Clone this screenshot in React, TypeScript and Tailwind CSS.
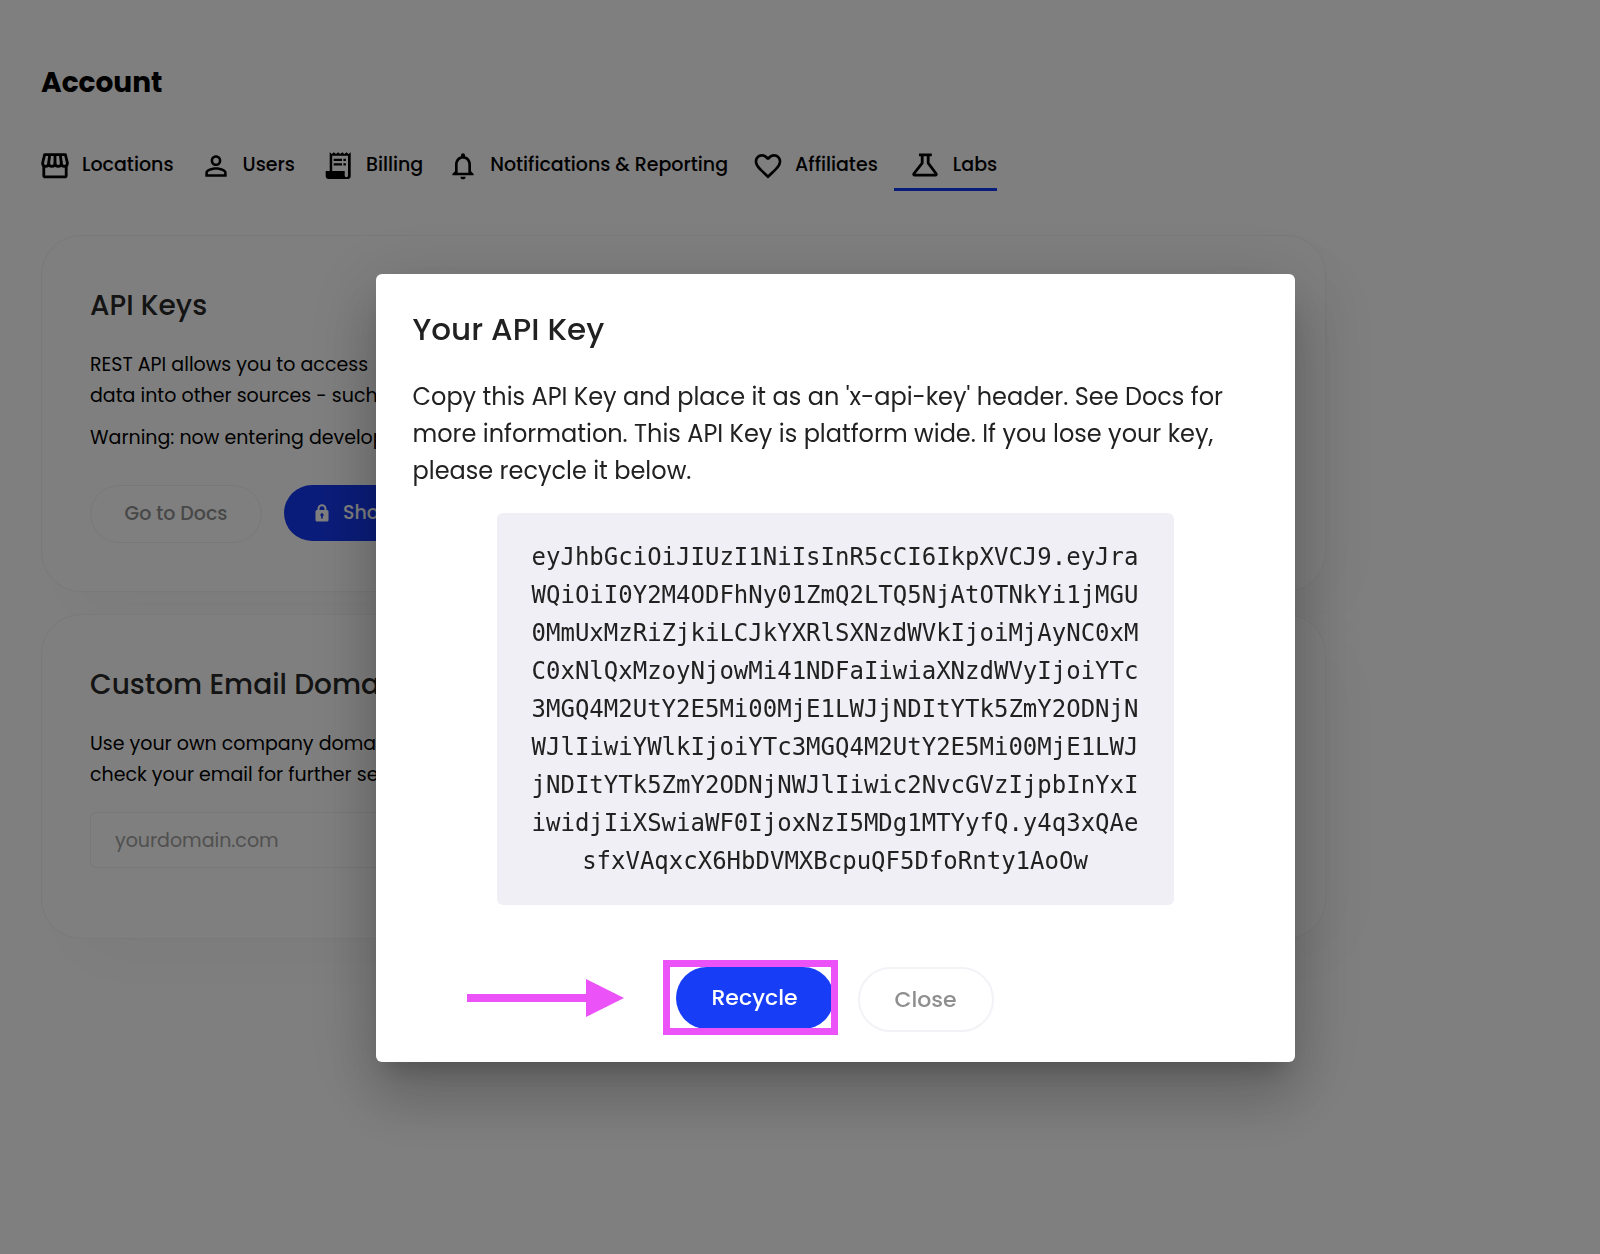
import type { ReactNode } from "react";
import { MdFavoriteBorder, MdNotificationsNone, MdPersonOutline } from "react-icons/md";

const API_KEY =
  "eyJhbGciOiJIUzI1NiIsInR5cCI6IkpXVCJ9.eyJra" +
  "WQiOiI0Y2M4ODFhNy01ZmQ2LTQ5NjAtOTNkYi1jMGU" +
  "0MmUxMzRiZjkiLCJkYXRlSXNzdWVkIjoiMjAyNC0xM" +
  "C0xNlQxMzoyNjowMi41NDFaIiwiaXNzdWVyIjoiYTc" +
  "3MGQ4M2UtY2E5Mi00MjE1LWJjNDItYTk5ZmY2ODNjN" +
  "WJlIiwiYWlkIjoiYTc3MGQ4M2UtY2E5Mi00MjE1LWJ" +
  "jNDItYTk5ZmY2ODNjNWJlIiwic2NvcGVzIjpbInYxI" +
  "iwidjIiXSwiaWF0IjoxNzI5MDg1MTYyfQ.y4q3xQAe" +
  "sfxVAqxcX6HbDVMXBcpuQF5DfoRnty1AoOw";

function StoreIcon() {
  return (
    <svg viewBox="0 0 32 32" className="size-8 shrink-0" fill="none" stroke="currentColor" strokeWidth="2.8" strokeLinejoin="round">
      <path d="M5.600 4.600h20.800l2 8.400c0 2-1.200 3.400-3 3.400s-3.100-1.400-3.100-3.400c0 2-1.300 3.400-3.100 3.400S16 15 16 13c0 2-1.400 3.400-3.200 3.400S9.700 15 9.700 13c0 2-1.300 3.400-3.100 3.400s-3-1.400-3-3.400z" />
      <path d="M10.700 4.600l-1 8.400M16 4.600V13M21.300 4.600l1 8.400" />
      <path d="M4.800 16v9.400c0 .8.500 1.400 1.400 1.400h19.600c.9 0 1.400-.6 1.400-1.400V16" />
    </svg>
  );
}

function ReceiptIcon() {
  return (
    <svg viewBox="0 0 32 32" className="size-8 shrink-0" fill="currentColor">
      <path
        fillRule="evenodd"
        d="M6.700 2.200l2.100 1.800 2.100-1.800L13 4l2.100-1.800L17.200 4l2.100-1.800L21.400 4l2.100-1.800L25.600 4l2.100-1.800V26a3 3 0 0 1-3 3h-19a3 3 0 0 1-3-3v-5h4zM9.200 5.800V21h12.500v4.500a1.600 1.600 0 0 0 3.300 0V5.800z"
      />
      <path d="M10.700 8.800h8.300v2.300h-8.300zM20.400 8.800h2.500v2.300h-2.500zM10.700 13.300h8.300v2.300h-8.300zM20.400 13.300h2.500v2.300h-2.500z" />
    </svg>
  );
}

function FlaskIcon() {
  return (
    <svg viewBox="0 0 32 32" className="size-8 shrink-0" fill="none" stroke="currentColor" strokeWidth="2.8" strokeLinejoin="round">
      <path d="M9 4.800h12.800M12.200 4.800v8.300L4 23.500c-.7.900-.3 1.700.8 1.700h20.400c1.100 0 1.500-.8.800-1.700L18.200 13.100V4.800" />
    </svg>
  );
}

function LockIcon() {
  return (
    <svg viewBox="0 0 14 18" className="h-[18px] w-[14px] shrink-0" fill="currentColor">
      <path
        fillRule="evenodd"
        d="M2.500 6V4.800a4.500 4.500 0 0 1 9 0V6h.5a1.500 1.500 0 0 1 1.500 1.500v8.500a1.500 1.500 0 0 1-1.500 1.500H2A1.500 1.500 0 0 1 .5 16V7.500A1.500 1.500 0 0 1 2 6zM4.500 6h5V4.800a2.500 2.500 0 0 0-5 0zM7 9.200a1.600 1.600 0 0 0-.8 3v2.300h1.600v-2.300a1.600 1.600 0 0 0-.8-3z"
      />
    </svg>
  );
}

function Tab({ icon, label, className }: { icon: ReactNode; label: string; className: string }) {
  return (
    <a href="#" className={`flex h-[50px] items-center gap-[11px] border-b-[3px] pt-0.5 ${className}`}>
      {icon}
      <span>{label}</span>
    </a>
  );
}

function Card({ title, children }: { title: string; children: ReactNode }) {
  return (
    <section className="rounded-[40px] border border-[#f2f2f6] bg-white px-12 pt-[49px] shadow-[24px_24px_64px_rgba(0,0,0,0.03)]">
      <h2 className="text-[28px] leading-[42px] font-medium text-[#282828]">{title}</h2>
      {children}
    </section>
  );
}

export default function App() {
  return (
    <div className="min-h-screen bg-white font-['Poppins','Inter',sans-serif] text-black">
      <main className="px-[41px] pt-[63px]">
        <h1 className="text-[28px] leading-10 font-bold">Account</h1>
        <nav className="mt-[38px] -ml-0.5 flex text-[19px] font-medium whitespace-nowrap">
          <Tab className="border-transparent" icon={<StoreIcon />} label="Locations" />
          <Tab className="ml-[26px] border-transparent" icon={<MdPersonOutline className="size-8" />} label="Users" />
          <Tab className="ml-7 border-transparent" icon={<ReceiptIcon />} label="Billing" />
          <Tab className="ml-6 border-transparent" icon={<MdNotificationsNone className="size-8" />} label="Notifications & Reporting" />
          <Tab className="ml-6 border-transparent" icon={<MdFavoriteBorder className="size-8" />} label="Affiliates" />
          <Tab className="ml-4 border-[#1539f4] pl-4" icon={<FlaskIcon />} label="Labs" />
        </nav>

        <div className="mt-11 flex max-w-[1285px] flex-col gap-[22px]">
          <Card title="API Keys">
            <div className="mt-[22px] text-[19px] leading-[31px]">
              <p>
                REST API allows you to access
                <br />
                data into other sources - such as
              </p>
              <p className="mt-[11px]">Warning: now entering developer</p>
            </div>
            <div className="mt-8 mb-12 flex gap-[22px] text-[19px] font-medium">
              <button className="h-[58px] w-[172px] rounded-full border border-[#f0f0f4] text-[#8f8f8f]">Go to Docs</button>
              <button className="flex h-14 items-center gap-[14px] rounded-full bg-[#1539f4] px-[31px] text-white">
                <LockIcon />
                Show
              </button>
            </div>
          </Card>
          <Card title="Custom Email Domain">
            <p className="mt-[22px] text-[19px] leading-[31px]">
              Use your own company domain
              <br />
              check your email for further setup
            </p>
            <input
              aria-label="Custom email domain"
              placeholder="yourdomain.com"
              className="mt-[22px] mb-[70px] block h-14 w-full max-w-[600px] rounded-md border border-[#f0f0f4] px-6 text-[19px] placeholder:text-[#a0a0a0]"
            />
          </Card>
        </div>
      </main>

      <div className="fixed inset-0 flex items-center justify-center bg-black/50 pt-[82px] pl-[70px]">
        <div
          role="dialog"
          aria-modal="true"
          aria-labelledby="dialog-title"
          className="w-full max-w-[919px] rounded-md bg-white px-[37px] pt-8 pb-[27px] text-[#212121] shadow-[0_17px_23px_-11px_rgba(0,0,0,0.2),0_37px_58px_5px_rgba(0,0,0,0.14),0_14px_70px_12px_rgba(0,0,0,0.12)]"
        >
          <h2 id="dialog-title" className="text-[31px] leading-[46px] font-medium">Your API Key</h2>
          <p className="mt-[26px] text-[24px] leading-[37px]">
            Copy this API Key and place it as an 'x-api-key' header. See Docs for
            <br />
            more information. This API Key is platform wide. If you lose your key,
            <br />
            please recycle it below.
          </p>
          <div className="mx-auto mt-6 w-full max-w-[677px] rounded-md bg-[#f0eff5] px-[29px] py-[25px] text-center font-['DejaVu_Sans_Mono',monospace] text-[24px] leading-[38px] break-all">
            {API_KEY}
          </div>
          <div className="mt-[55px] flex items-center pl-[54px] text-[22px] font-medium">
            <svg viewBox="0 0 157 38" className="h-[38px] w-[157px]" fill="#eb52f7">
              <path d="M0 15h119V0l38 19-38 19V23H0z" />
            </svg>
            <div className="relative ml-[39px] flex h-[75px] w-[175px] items-center pl-[13px]">
              <button className="h-[62px] w-[158px] rounded-full bg-[#173df7] text-white">Recycle</button>
              <span className="pointer-events-none absolute inset-0 border-[7px] border-[#eb52f7]" />
            </div>
            <button className="mb-[3px] ml-5 h-[65px] w-[136px] self-end rounded-full border-2 border-[#f3f3f7] text-[#8f8f8f]">Close</button>
          </div>
        </div>
      </div>
    </div>
  );
}
